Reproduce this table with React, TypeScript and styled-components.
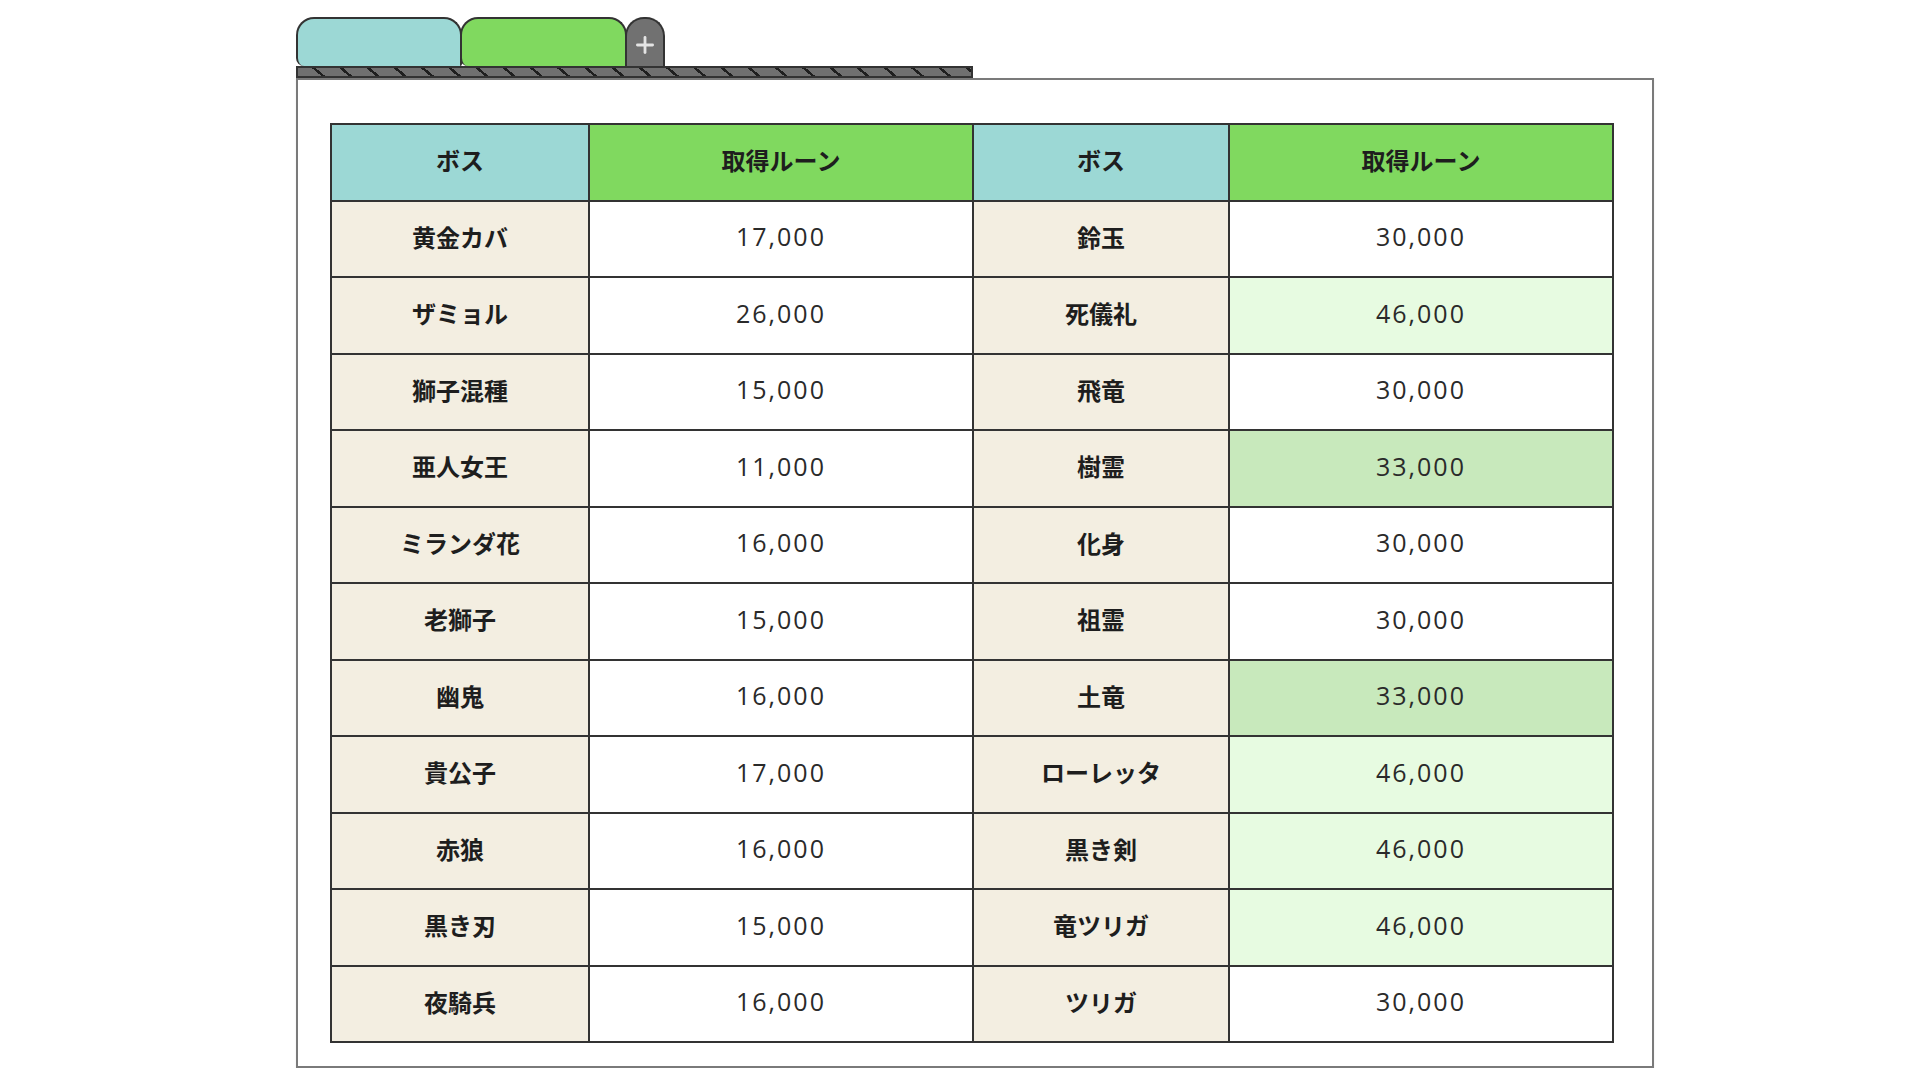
import React from 'react';
import styled, { createGlobalStyle } from 'styled-components';
import { Plus } from 'lucide-react';

const GlobalStyle = createGlobalStyle`
  html, body {
    margin: 0;
    padding: 0;
    background: #ffffff;
  }
`;

const Page = styled.div`
  padding: 17px 0 0 296px;
  font-family: "Noto Sans CJK JP", "Noto Sans", sans-serif;
`;

const TabRow = styled.div`
  display: flex;
  align-items: flex-end;
  height: 49px;
`;

const Tab = styled.div<{ $bg: string; $w: number }>`
  box-sizing: border-box;
  width: ${p => p.$w}px;
  height: 49px;
  margin-right: -2px;
  background: ${p => p.$bg};
  border: 2px solid #333;
  border-bottom: none;
  border-radius: 18px 18px 2px 8px;
`;

const AddTab = styled.div`
  box-sizing: border-box;
  width: 40px;
  height: 49px;
  background: #717171;
  border: 2px solid #333;
  border-bottom: none;
  border-radius: 19px 19px 0 0;
  display: flex;
  justify-content: center;
  padding-top: 13px;
  color: #e4e4e4;
`;

const HatchBar = styled.div`
  box-sizing: border-box;
  width: 677px;
  height: 12px;
  border: 2px solid #333;
  background: repeating-linear-gradient(
    40deg,
    #707070 0px,
    #707070 15px,
    #1f1f1f 15px,
    #1f1f1f 17.5px
  );
`;

const Panel = styled.div`
  box-sizing: border-box;
  width: 1358px;
  border: 2px solid #7a7a7a;
  padding: 43px 40px 23px 32px;
  box-shadow: 0 1px 2px rgba(0, 0, 0, 0.08);
`;

const Table = styled.table`
  width: 1282px;
  border-collapse: collapse;
  table-layout: fixed;
  border: 2px solid #333;
`;

const Row = styled.tr`
  height: 76.5px;
`;

const Head = styled.th<{ $bg: string }>`
  background: ${p => p.$bg};
  border: 2px solid #333;
  padding: 0 0 5px;
  font-size: 24px;
  font-weight: 700;
  color: #1e1e1e;
  text-align: center;
`;

const NameCell = styled.td`
  background: #f3eee1;
  border: 2px solid #333;
  padding: 0 0 5px;
  font-size: 24px;
  font-weight: 700;
  color: #1e1e1e;
  text-align: center;
`;

const RuneCell = styled.td<{ $tone: 'plain' | 'light' | 'mid' }>`
  background: ${p => (p.$tone === 'mid' ? '#c8e9bc' : p.$tone === 'light' ? '#e7fbe1' : '#ffffff')};
  border: 2px solid #333;
  padding: 0 0 5px;
  font-family: "Open Sans", "Noto Sans", sans-serif;
  font-size: 25px;
  font-weight: 400;
  letter-spacing: 2px;
  color: #2a2a2a;
  text-align: center;
`;

type Tone = 'plain' | 'light' | 'mid';

const rows: [string, string, string, string, Tone][] = [
  ['黄金カバ', '17,000', '鈴玉', '30,000', 'plain'],
  ['ザミョル', '26,000', '死儀礼', '46,000', 'light'],
  ['獅子混種', '15,000', '飛竜', '30,000', 'plain'],
  ['亜人女王', '11,000', '樹霊', '33,000', 'mid'],
  ['ミランダ花', '16,000', '化身', '30,000', 'plain'],
  ['老獅子', '15,000', '祖霊', '30,000', 'plain'],
  ['幽鬼', '16,000', '土竜', '33,000', 'mid'],
  ['貴公子', '17,000', 'ローレッタ', '46,000', 'light'],
  ['赤狼', '16,000', '黒き剣', '46,000', 'light'],
  ['黒き刃', '15,000', '竜ツリガ', '46,000', 'light'],
  ['夜騎兵', '16,000', 'ツリガ', '30,000', 'plain'],
];

export default function App() {
  return (
    <Page>
      <GlobalStyle />
      <TabRow>
        <Tab $bg="#9cd8d5" $w={166} />
        <Tab $bg="#80d95f" $w={167} />
        <AddTab>
          <Plus size={26} strokeWidth={2.6} />
        </AddTab>
      </TabRow>
      <HatchBar />
      <Panel>
        <Table>
          <colgroup>
            <col style={{ width: 258 }} />
            <col style={{ width: 384 }} />
            <col style={{ width: 256 }} />
            <col style={{ width: 384 }} />
          </colgroup>
          <thead>
            <Row>
              <Head $bg="#9cd8d5">ボス</Head>
              <Head $bg="#80d95f">取得ルーン</Head>
              <Head $bg="#9cd8d5">ボス</Head>
              <Head $bg="#80d95f">取得ルーン</Head>
            </Row>
          </thead>
          <tbody>
            {rows.map(r => (
              <Row key={r[0]}>
                <NameCell>{r[0]}</NameCell>
                <RuneCell $tone="plain">{r[1]}</RuneCell>
                <NameCell>{r[2]}</NameCell>
                <RuneCell $tone={r[4]}>{r[3]}</RuneCell>
              </Row>
            ))}
          </tbody>
        </Table>
      </Panel>
    </Page>
  );
}
